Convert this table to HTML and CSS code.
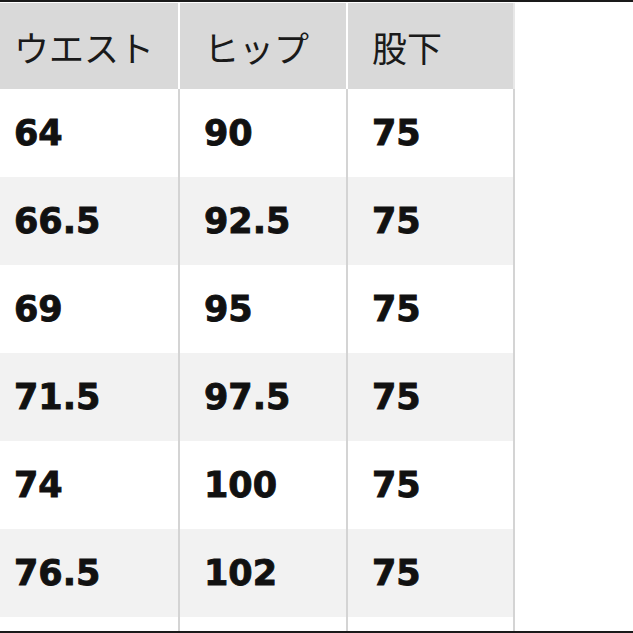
FILE: index.html
```html
<!DOCTYPE html>
<html lang="ja">
<head>
<meta charset="utf-8">
<link rel="stylesheet" href="styles.css">
</head>
<body>
<div class="page">
  <div class="bar"></div>
  <div class="table">
    <div class="row head">
      <div class="cell c1">ウエスト</div>
      <div class="cell c2">ヒップ</div>
      <div class="cell c3">股下</div>
    </div>
    <div class="row">
      <div class="cell c1">64</div><div class="cell c2">90</div><div class="cell c3">75</div>
    </div>
    <div class="row alt">
      <div class="cell c1">66.5</div><div class="cell c2">92.5</div><div class="cell c3">75</div>
    </div>
    <div class="row">
      <div class="cell c1">69</div><div class="cell c2">95</div><div class="cell c3">75</div>
    </div>
    <div class="row alt">
      <div class="cell c1">71.5</div><div class="cell c2">97.5</div><div class="cell c3">75</div>
    </div>
    <div class="row">
      <div class="cell c1">74</div><div class="cell c2">100</div><div class="cell c3">75</div>
    </div>
    <div class="row alt">
      <div class="cell c1">76.5</div><div class="cell c2">102</div><div class="cell c3">75</div>
    </div>
    <div class="row filler">
      <div class="cell c1"></div><div class="cell c2"></div><div class="cell c3"></div>
    </div>
  </div>
  <div class="bar"></div>
</div>
</body>
</html>
```

FILE: styles.css
```css
html, body {
  margin: 0;
  padding: 0;
  background: #ffffff;
}
.page {
  width: 633px;
  height: 633px;
  display: flex;
  flex-direction: column;
  overflow: hidden;
}
.bar {
  height: 2px;
  background: #1a1a1a;
  flex: none;
}
.table {
  flex: 1;
  display: flex;
  flex-direction: column;
  padding-top: 1px;
}
.row {
  display: grid;
  grid-template-columns: 180px 168px 167px;
  height: 88px;
  font-family: "DejaVu Sans", "Liberation Sans", sans-serif;
  font-weight: bold;
  font-size: 35px;
  color: #111111;
  -webkit-text-stroke: 0.9px #111111;
}
.row.head {
  height: 86px;
  font-family: "Noto Sans CJK JP", "Noto Sans", sans-serif;
  font-weight: 400;
  font-size: 35px;
  color: #1a1a1a;
  -webkit-text-stroke: 0;
}
.row.filler {
  height: auto;
  flex: 1;
}
.cell {
  box-sizing: border-box;
  display: flex;
  align-items: center;
  border-right: 2px solid #d4d4d4;
  white-space: nowrap;
}
.head .cell {
  background: #d9d9d9;
  border-right-color: #ffffff;
}
.head .c3 {
  border-right-color: #e8e8e8;
}
.alt .cell {
  background: #f2f2f2;
}
.c1 { padding-left: 14px; }
.c2 { padding-left: 24px; }
.c3 { padding-left: 24px; }
```
